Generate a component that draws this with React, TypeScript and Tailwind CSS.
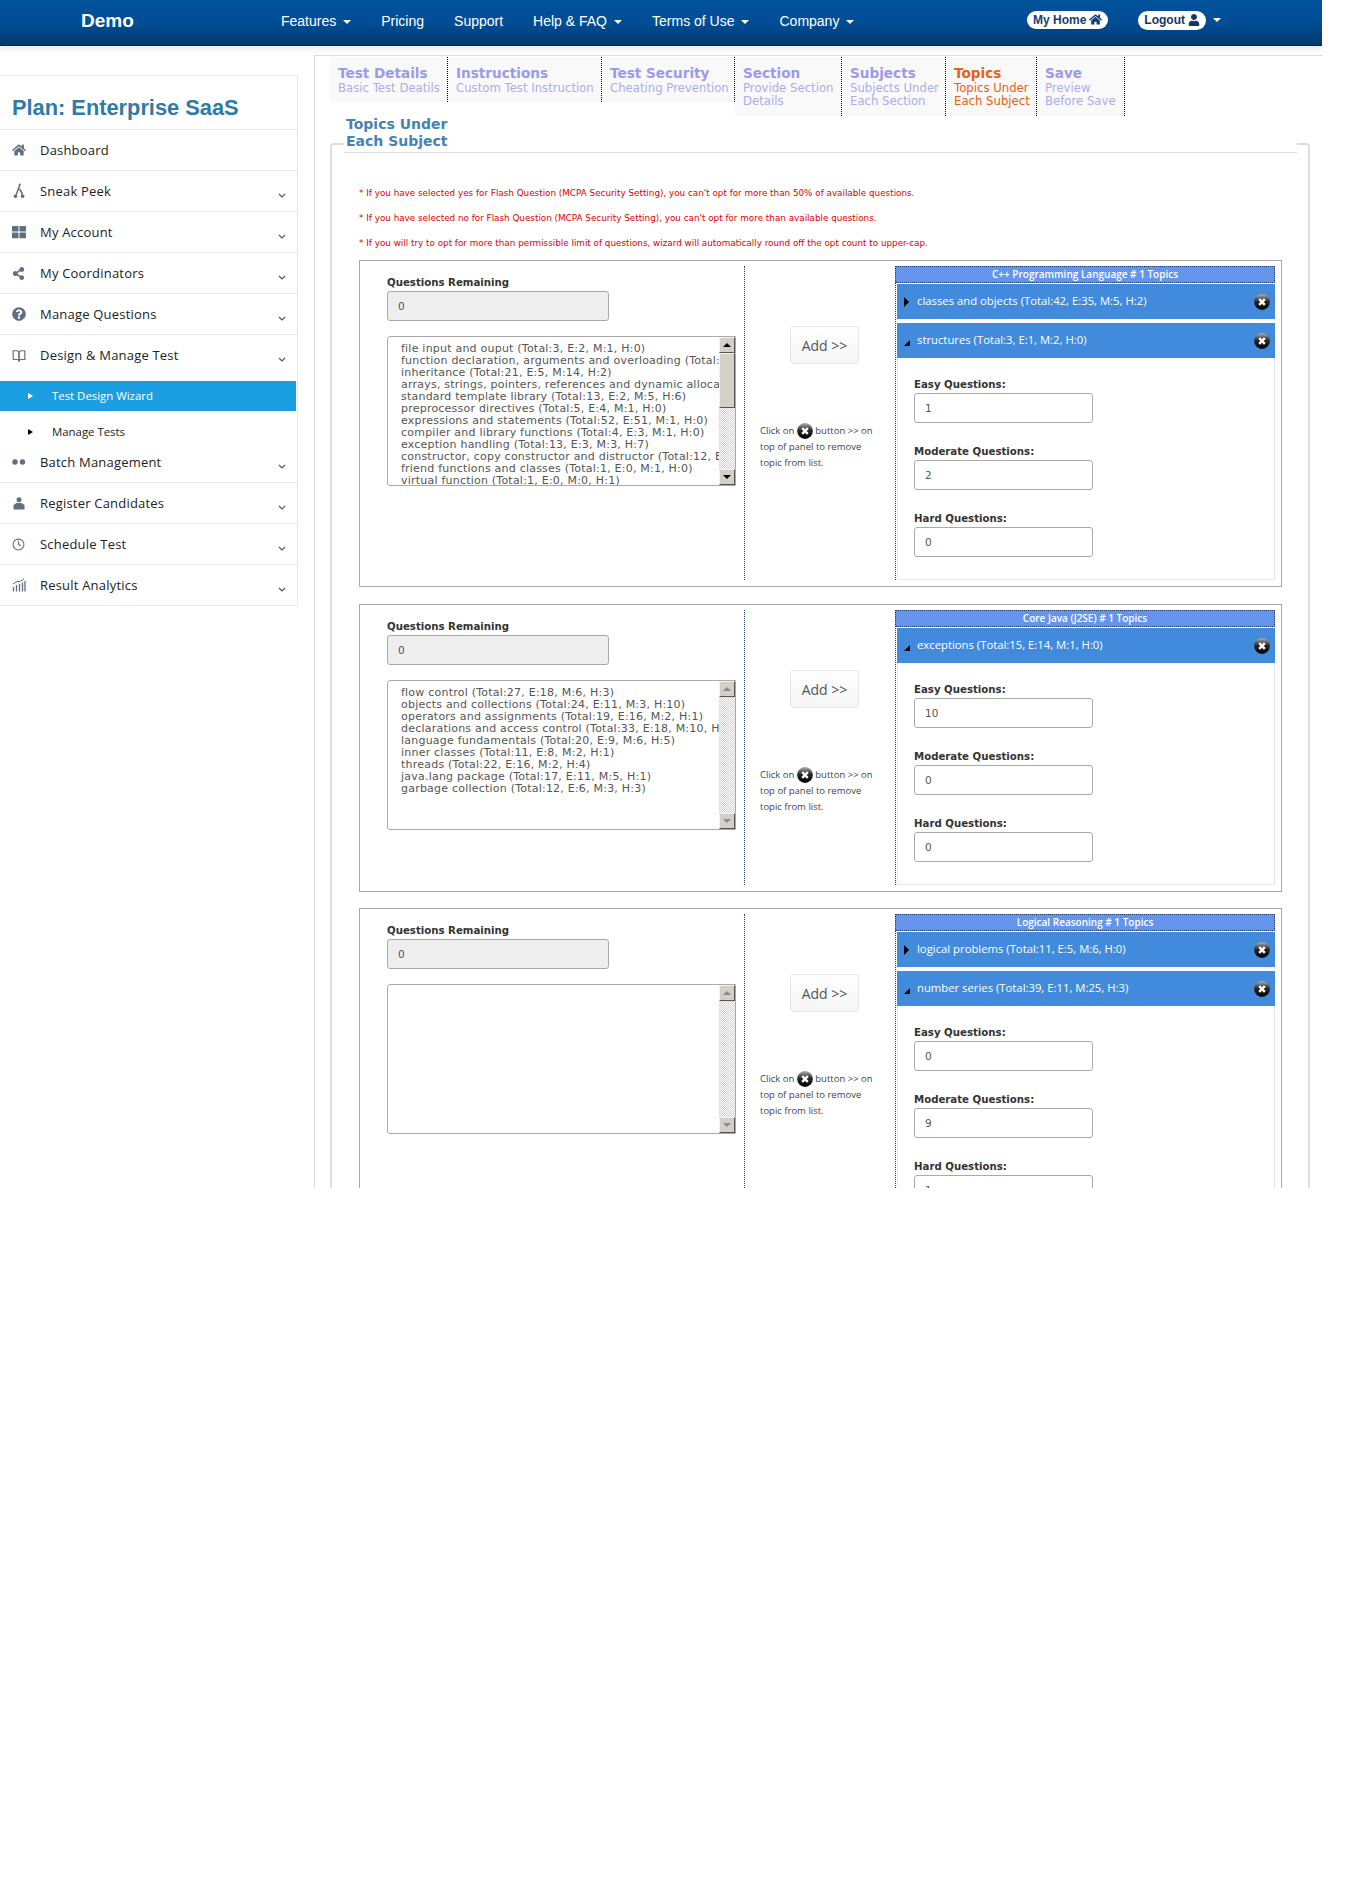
import React from "react";
import { FaHome, FaThLarge, FaShareAlt, FaQuestionCircle, FaUser } from "react-icons/fa";
import { FiBookOpen, FiClock } from "react-icons/fi";

const Caret = () => (
  <span className="inline-block ml-[7px] align-middle w-0 h-0 border-x-4 border-x-transparent border-t-4 border-t-white" />
);

function CloseIcon({ size = 16 }: { size?: number }) {
  return (
    <svg width={size} height={size} viewBox="0 0 16 16" className="inline-block shrink-0">
      <defs>
        <linearGradient id="closeGrad" x1="0" y1="0" x2="0" y2="1">
          <stop offset="0" stopColor="#b0b0b0" />
          <stop offset="0.45" stopColor="#2a2a2a" />
          <stop offset="1" stopColor="#000" />
        </linearGradient>
      </defs>
      <circle cx="8" cy="8" r="7.9" fill="url(#closeGrad)" />
      <path d="M5.2 5.2 10.8 10.8M10.8 5.2 5.2 10.8" stroke="#fff" strokeWidth="2.4" />
    </svg>
  );
}

const chevron = (
  <svg width="8" height="5" viewBox="0 0 8 5" className="mt-[8px]">
    <path d="M1 1l3 3 3-3" fill="none" stroke="#555" strokeWidth="1.2" />
  </svg>
);

const iconCls = "text-[#5f6f81]";
const sneakIcon = (
  <svg width="14" height="16" viewBox="0 0 14 16" className={iconCls}>
    <path d="M7 1 8 1.5 5.5 8 3.5 13.5M7.5 6l2.5 4 .6 3.5" fill="none" stroke="currentColor" strokeWidth="1.5" />
    <circle cx="3.4" cy="13.2" r="1.8" fill="currentColor" />
    <circle cx="10.6" cy="13.2" r="1.8" fill="currentColor" />
  </svg>
);
const dotsIcon = (
  <svg width="14" height="6" viewBox="0 0 14 6" className={iconCls}>
    <circle cx="3" cy="3" r="2.7" fill="currentColor" />
    <circle cx="10.5" cy="3" r="2.7" fill="currentColor" />
  </svg>
);
const personIcon = (
  <svg width="12" height="13" viewBox="0 0 12 13" className={iconCls}>
    <circle cx="6" cy="2.8" r="2.5" fill="currentColor" />
    <path d="M0.5 12.5V8l3-2h5l3 2v4.5zM5.4 6h1.2l.5 4h-2.2z" fill="currentColor" />
  </svg>
);
const chartIcon = (
  <svg width="14" height="14" viewBox="0 0 14 14" className={iconCls}>
    <path d="M1.5 13.5V9M4.5 13.5V7M7.5 13.5V6M10.5 13.5V4.5M13 13.5V3" stroke="currentColor" strokeWidth="1.3" fill="none" />
    <path d="M1 6 5 3.5 8 3.5 12 .8" stroke="currentColor" strokeWidth="1" fill="none" />
  </svg>
);

const topMenu = [
  { label: "Features", caret: true },
  { label: "Pricing" },
  { label: "Support" },
  { label: "Help & FAQ", caret: true },
  { label: "Terms of Use", caret: true },
  { label: "Company", caret: true },
];

const sideTop = [
  { label: "Dashboard", icon: <FaHome size={14} className={iconCls} />, chevron: false },
  { label: "Sneak Peek", icon: sneakIcon, chevron: true },
  { label: "My Account", icon: <FaThLarge size={14} className={iconCls} />, chevron: true },
  { label: "My Coordinators", icon: <FaShareAlt size={13} className={iconCls} />, chevron: true },
  { label: "Manage Questions", icon: <FaQuestionCircle size={14} className={iconCls} />, chevron: true },
];
const sideBottom = [
  { label: "Batch Management", icon: dotsIcon },
  { label: "Register Candidates", icon: personIcon },
  { label: "Schedule Test", icon: <FiClock size={13} className={iconCls} /> },
  { label: "Result Analytics", icon: chartIcon },
];

function SideRow({ label, icon, hasChevron, noBorder }: { label: string; icon: React.ReactNode; hasChevron: boolean; noBorder?: boolean }) {
  return (
    <div className={`flex items-center h-[41px] pl-[11px] pr-[11px] ${noBorder ? "" : "border-b border-[#e7e7e7]"}`}>
      <span className="w-[15px] flex justify-center">{icon}</span>
      <span className="ml-[14px] pt-px flex-1 text-[13px] tracking-[0.2px] text-[#222] font-['Open_Sans',sans-serif]">{label}</span>
      {hasChevron && chevron}
    </div>
  );
}

const tabs = [
  { w: "w-[118px]", title: "Test Details", lines: ["Basic Test Deatils"] },
  { w: "w-[154px]", title: "Instructions", lines: ["Custom Test Instruction"] },
  { w: "w-[133px]", title: "Test Security", lines: ["Cheating Prevention"] },
  { w: "w-[107px]", title: "Section", lines: ["Provide Section", "Details"] },
  { w: "w-[104px]", title: "Subjects", lines: ["Subjects Under", "Each Section"] },
  { w: "w-[91px]", title: "Topics", lines: ["Topics Under", "Each Subject"], active: true },
  { w: "w-[88px]", title: "Save", lines: ["Preview", "Before Save"] },
];

function ScrollBtn({ up, disabled }: { up?: boolean; disabled?: boolean }) {
  return (
    <div className="w-[16px] h-[16px] shrink-0 bg-[#d4d0c8] border border-t-[#f4f3f0] border-l-[#f4f3f0] border-r-[#555] border-b-[#555] flex items-center justify-center">
      <span className={`w-0 h-0 border-x-[4px] border-x-transparent ${up ? "border-b-[4px]" : "border-t-[4px]"} ${disabled ? "border-b-[#8a8a8a] border-t-[#8a8a8a]" : "border-b-black border-t-black"}`} />
    </div>
  );
}

function ListBox({ items }: { items: string[] }) {
  const hasThumb = items.length > 11;
  return (
    <div className="mt-[15px] w-[349px] h-[150px] flex border border-[#aaa] rounded-l-[3px] overflow-hidden bg-white">
      <div className="flex-1 overflow-hidden pl-[13px] pt-[6px] text-[11px] tracking-[0.22px] leading-[12px] text-[#555] font-['DejaVu_Sans',sans-serif] whitespace-nowrap">
        {items.map((t) => (
          <div key={t}>{t}</div>
        ))}
      </div>
      <div className="w-[16px] flex flex-col shrink-0">
        <ScrollBtn up disabled={!hasThumb} />
        <div className="flex-1 bg-[repeating-conic-gradient(#d4d0c8_0_25%,#fff_0_50%)] bg-[length:2px_2px]">
          {hasThumb && (
            <div className="h-[55px] bg-[#d4d0c8] border border-t-[#f4f3f0] border-l-[#f4f3f0] border-r-[#555] border-b-[#555]" />
          )}
        </div>
        <ScrollBtn disabled={!hasThumb} />
      </div>
    </div>
  );
}

function Field({ label, value }: { label: string; value: string }) {
  return (
    <div className="mb-[22px] last:mb-0">
      <div className="h-[15px] text-[10.2px] leading-[14px] font-bold text-[#333] font-['DejaVu_Sans',sans-serif]">{label}</div>
      <input
        readOnly
        value={value}
        className="block w-[179px] h-[30px] pl-[10px] bg-white border border-[#aaa] rounded-[3px] text-[10.5px] text-[#555] font-['DejaVu_Sans',sans-serif]"
      />
    </div>
  );
}

function TopicRow({ label, open }: { label: string; open?: boolean }) {
  return (
    <div className="h-[35px] bg-[#428bdc] flex items-center pl-[7px] pr-[5px] text-white text-[11.3px] font-['Open_Sans',sans-serif]">
      {open ? (
        <span className="w-0 h-0 mt-[4px] border-l-[6px] border-l-transparent border-b-[6px] border-b-black" />
      ) : (
        <span className="w-0 h-0 border-y-[5px] border-y-transparent border-l-[5px] border-l-black mr-px" />
      )}
      <span className="ml-[7px] flex-1">{label}</span>
      <CloseIcon />
    </div>
  );
}

type Topic = { label: string; open?: boolean };
function SubjectBox({
  subject,
  list,
  topics,
  fields,
  className = "",
}: {
  subject: string;
  list: string[];
  topics: Topic[];
  fields: [string, string, string];
  className?: string;
}) {
  return (
    <div className={`w-[923px] border border-[#aaa] pt-[5px] pb-[6px] flex items-stretch ${className}`}>
      <div className="w-[385px] pl-[27px] pt-[10px] border-r border-dotted border-[#1b3a6b]">
        <div className="text-[10.2px] leading-[14px] font-bold text-[#333] font-['DejaVu_Sans',sans-serif]">Questions Remaining</div>
        <input
          readOnly
          value="0"
          className="block mt-[1px] w-[222px] h-[30px] pl-[10px] bg-[#eee] border border-[#aaa] rounded-[3px] text-[10.5px] text-[#555] font-['DejaVu_Sans',sans-serif]"
        />
        <ListBox items={list} />
      </div>
      <div className="w-[150px] pt-[60px] pl-[15px]">
        <button className="block ml-[30px] w-[69px] h-[38px] rounded-[4px] border border-[#e6e6e6] bg-gradient-to-b from-white to-[#f5f5f5] text-[14px] text-[#555] font-['Open_Sans',sans-serif]">
          Add &gt;&gt;
        </button>
        <p className="mt-[59px] text-[9.5px] leading-[16px] text-[#444] font-['Open_Sans',sans-serif] whitespace-nowrap">
          Click on <CloseIcon /> button &gt;&gt; on
          <br />
          top of panel to remove
          <br />
          topic from list.
        </p>
      </div>
      <div className="w-[380px] border-l border-dotted border-[#1b3a6b]">
        <div className="-ml-px h-[17px] bg-[#6495ed] border border-dotted border-[#1b3a6b] text-center text-white text-[10px] leading-[15px] font-semibold font-['Open_Sans',sans-serif]">
          {subject}
        </div>
        <div className="mt-px pl-px flex flex-col gap-[4px]">
          {topics.map((t) => (
            <TopicRow key={t.label} label={t.label} open={t.open} />
          ))}
        </div>
        <div className="ml-px px-[16px] pt-[20px] pb-[21px] h-[222px] border-x border-b border-[#e5e5e5]">
          <Field label="Easy Questions:" value={fields[0]} />
          <Field label="Moderate Questions:" value={fields[1]} />
          <Field label="Hard Questions:" value={fields[2]} />
        </div>
      </div>
    </div>
  );
}

export default function App() {
  return (
    <div className="w-[1322px] h-[1188px] overflow-hidden bg-white font-['Liberation_Sans',sans-serif]">
      <header className="h-[46px] pb-[2px] flex items-center bg-gradient-to-b from-[#02529c] via-[#024e96] to-[#00396f] border-b border-[#00284f] shadow-[0_2px_8px_rgba(0,0,0,0.12)] text-white relative">
        <div className="ml-[81px] w-[200px] text-[19px] font-bold">Demo</div>
        <nav className="flex gap-[30px] text-[14px]">
          {topMenu.map((m) => (
            <span key={m.label} className="whitespace-nowrap">
              {m.label}
              {m.caret && <Caret />}
            </span>
          ))}
        </nav>
        <div className="ml-[auto] -mt-[3px] mr-[101px] flex items-center">
          <span className="-mt-[1px] flex items-center gap-[3px] h-[18px] px-[6px] rounded-full bg-white text-[#1a3d70] text-[12px] font-bold">
            My Home <FaHome size={13} />
          </span>
          <span className="ml-[30px] flex items-center gap-[3px] h-[19px] px-[6px] rounded-full bg-white text-[#143766] text-[12px] font-bold">
            Logout <FaUser size={12} />
          </span>
          <Caret />
        </div>
      </header>

      <div className="flex items-start">
        <aside className="mt-[29px] w-[298px] border-t border-r border-[#e7e7e7]">
          <div className="h-[54px] border-b border-[#e7e7e7] pl-[12px] pt-[18px] text-[21.8px] leading-[28px] font-bold text-[#2f7ba5]">
            Plan: Enterprise SaaS
          </div>
          {sideTop.map((r) => (
            <SideRow key={r.label} label={r.label} icon={r.icon} hasChevron={r.chevron} />
          ))}
          <SideRow label="Design & Manage Test" icon={<FiBookOpen size={14} className={iconCls} />} hasChevron noBorder />
          <div className="mt-[5px] h-[30px] mr-px flex items-center pl-[28px] bg-[#1c9fe0] text-white text-[11.4px] font-['Open_Sans',sans-serif]">
            <span className="w-0 h-0 border-y-[3.5px] border-y-transparent border-l-[5px] border-l-white" />
            <span className="ml-[19px]">Test Design Wizard</span>
          </div>
          <div className="h-[31px] pt-[10px] flex items-center pl-[28px] text-[#222] text-[11.4px] font-['Open_Sans',sans-serif]">
            <span className="w-0 h-0 border-y-[3.5px] border-y-transparent border-l-[5px] border-l-black" />
            <span className="ml-[19px]">Manage Tests</span>
          </div>
          {sideBottom.map((r) => (
            <SideRow key={r.label} label={r.label} icon={r.icon} hasChevron />
          ))}
        </aside>

        <main className="mt-[9px] ml-[16px] w-[1008px] h-[1200px] border-l border-t border-[#ddd] pl-[15px] pt-px">
          <div className="h-[59px] flex items-start">
            {tabs.map((t) => (
              <div
                key={t.title}
                className={`${t.w} shrink-0 px-[8px] pt-[8px] bg-[#f9f9f9] border-r border-dotted border-black ${t.lines.length === 2 ? "h-[59px]" : "h-[45px]"}`}
              >
                <div className={`text-[13.6px] leading-[17px] font-bold whitespace-nowrap font-['DejaVu_Sans',sans-serif] ${t.active ? "text-[#e8601a]" : "text-[#9b9bea]"}`}>
                  {t.title}
                </div>
                {t.lines.map((l) => (
                  <div key={l} className={`text-[11.7px] leading-[13px] whitespace-nowrap font-['DejaVu_Sans',sans-serif] ${t.active ? "text-[#e8601a]" : "text-[#acacec]"}`}>
                    {l}
                  </div>
                ))}
              </div>
            ))}
          </div>

          <fieldset className="mt-[18px] w-[980px] border-2 border-[#ddd] rounded-[4px] pl-[27px] pb-[200px]">
            <legend className="-ml-[15px] w-[953px] h-[19px] mb-[18px] pl-[2px] border-b border-[#ddd] text-[14px] leading-[17px] font-bold text-[#4682b4] font-['DejaVu_Sans',sans-serif]">
              <div className="-mt-[18px]">
                Topics Under
                <br />
                Each Subject
              </div>
            </legend>
            <div className="pt-[10px] text-[8.8px] leading-[25px] text-[#e00000] font-['DejaVu_Sans',sans-serif]">
              <p>* If you have selected yes for Flash Question (MCPA Security Setting), you can't opt for more than 50% of available questions.</p>
              <p>* If you have selected no for Flash Question (MCPA Security Setting), you can't opt for more than available questions.</p>
              <p>* If you will try to opt for more than permissible limit of questions, wizard will automatically round off the opt count to upper-cap.</p>
            </div>
            <div className="mt-[4px] flex flex-col gap-[16px]">
              <SubjectBox
                className="mb-px"
                subject="C++ Programming Language # 1 Topics"
                list={[
                  "file input and ouput (Total:3, E:2, M:1, H:0)",
                  "function declaration, arguments and overloading (Total:28, E:20, M:6, H:2)",
                  "inheritance (Total:21, E:5, M:14, H:2)",
                  "arrays, strings, pointers, references and dynamic allocation (Total:30, E:20)",
                  "standard template library (Total:13, E:2, M:5, H:6)",
                  "preprocessor directives (Total:5, E:4, M:1, H:0)",
                  "expressions and statements (Total:52, E:51, M:1, H:0)",
                  "compiler and library functions (Total:4, E:3, M:1, H:0)",
                  "exception handling (Total:13, E:3, M:3, H:7)",
                  "constructor, copy constructor and distructor (Total:12, E:0, M:6, H:6)",
                  "friend functions and classes (Total:1, E:0, M:1, H:0)",
                  "virtual function (Total:1, E:0, M:0, H:1)",
                ]}
                topics={[
                  { label: "classes and objects (Total:42, E:35, M:5, H:2)" },
                  { label: "structures (Total:3, E:1, M:2, H:0)", open: true },
                ]}
                fields={["1", "2", "0"]}
              />
              <SubjectBox
                subject="Core Java (J2SE) # 1 Topics"
                list={[
                  "flow control (Total:27, E:18, M:6, H:3)",
                  "objects and collections (Total:24, E:11, M:3, H:10)",
                  "operators and assignments (Total:19, E:16, M:2, H:1)",
                  "declarations and access control (Total:33, E:18, M:10, H:5)",
                  "language fundamentals (Total:20, E:9, M:6, H:5)",
                  "inner classes (Total:11, E:8, M:2, H:1)",
                  "threads (Total:22, E:16, M:2, H:4)",
                  "java.lang package (Total:17, E:11, M:5, H:1)",
                  "garbage collection (Total:12, E:6, M:3, H:3)",
                ]}
                topics={[{ label: "exceptions (Total:15, E:14, M:1, H:0)", open: true }]}
                fields={["10", "0", "0"]}
              />
              <SubjectBox
                subject="Logical Reasoning # 1 Topics"
                list={[]}
                topics={[
                  { label: "logical problems (Total:11, E:5, M:6, H:0)" },
                  { label: "number series (Total:39, E:11, M:25, H:3)", open: true },
                ]}
                fields={["0", "9", "1"]}
              />
            </div>
          </fieldset>
        </main>
      </div>
    </div>
  );
}
